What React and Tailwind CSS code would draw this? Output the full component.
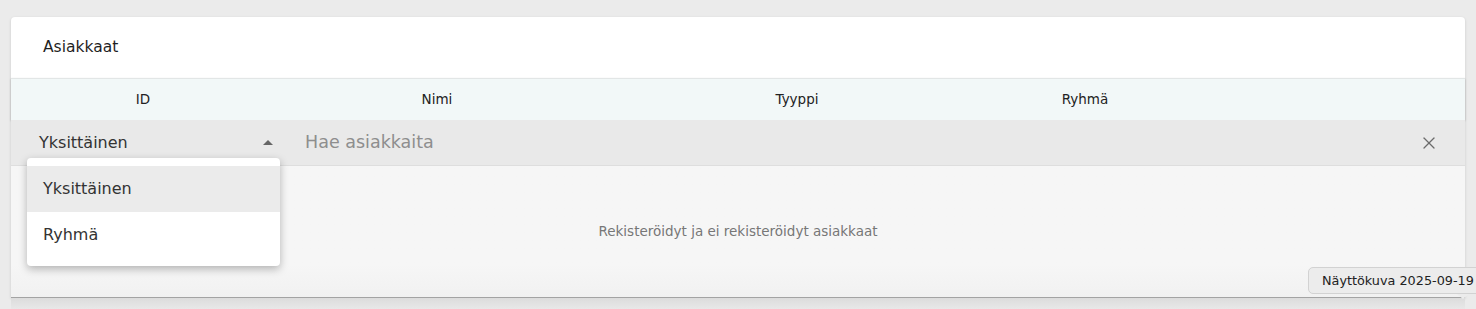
import { X } from 'lucide-react';

const columns = [
  { label: 'ID', width: 'w-[264px]' },
  { label: 'Nimi', width: 'w-[324px]' },
  { label: 'Tyyppi', width: 'w-[396px]' },
  { label: 'Ryhmä', width: 'w-[180px]' },
];

export default function App() {
  return (
    <div className="relative h-[309px] w-full overflow-hidden bg-[#ebebeb] px-[11px] pt-[17px] font-['DejaVu_Sans',sans-serif] text-[#2b2b2b]">
      <div className="rounded-t-[4px] bg-white shadow-[0_1px_3px_rgba(0,0,0,0.15)]">
        {/* otsikko */}
        <div className="flex h-[61px] items-center pl-8 text-[15.5px] text-[#1f1f1f]">Asiakkaat</div>

        {/* sarakkeet */}
        <div className="relative z-10 flex h-[42px] items-center border-t border-[#e2e6e6] bg-[#f2f8f8] text-[13.5px] text-[#222] shadow-[0_1px_2px_rgba(0,0,0,0.25)]">
          {columns.map((c) => (
            <div key={c.label} className={`${c.width} text-center`}>
              {c.label}
            </div>
          ))}
        </div>

        {/* suodatin */}
        <div className="relative z-20 flex h-[46px] items-center border-b border-[#dedede] bg-[#e9e9e9]">
          <div className="relative flex h-full w-[264px] items-center justify-between pl-[28px] pr-[2px]">
            <span className="text-[16px] text-[#333]">Yksittäinen</span>
            <span className="h-0 w-0 border-x-[5px] border-b-[5px] border-x-transparent border-b-[#666]" />

            <div className="absolute left-[16px] top-[38px] w-[253px] rounded-[4px] bg-white py-2 shadow-[0_3px_8px_rgba(0,0,0,0.28)]">
              <div className="flex h-[46px] items-center bg-[#ebebeb] px-4 text-[16px] text-[#333]">Yksittäinen</div>
              <div className="flex h-[46px] items-center px-4 text-[16px] text-[#333]">Ryhmä</div>
            </div>
          </div>
          <div className="flex flex-1 items-center pl-[30px] pr-[26px]">
            <span className="flex-1 text-[17.5px] text-[#8e8e8e]">Hae asiakkaita</span>
            <X size={20} strokeWidth={1.5} className="text-[#6b6b6b]" />
          </div>
        </div>

        {/* sisältö */}
        <div className="flex h-[132px] items-center justify-center border-b border-[#a3a3a3] bg-gradient-to-b from-[#f6f6f6] from-75% to-[#f1f1f1] text-[13.5px] text-[#777]">
          Rekisteröidyt ja ei rekisteröidyt asiakkaat
        </div>
      </div>
      <div className="h-[11px] bg-gradient-to-b from-[#dcdcdc] to-[#e8e8e8]" />

      {/* työkaluvihje */}
      <div className="absolute left-[1308px] top-[267px] flex h-[27px] w-[200px] items-center whitespace-nowrap rounded-[5px] border border-[#d2d2d2] bg-[#ececec] pl-[13px] text-[12.8px] text-[#222]">
        <span>Näyttökuva 2025-09-19</span>
        <span className="absolute left-[148px] top-[26px] h-0 w-0 border-x-[6px] border-t-[5px] border-x-transparent border-t-[#ececec]" />
      </div>
    </div>
  );
}
